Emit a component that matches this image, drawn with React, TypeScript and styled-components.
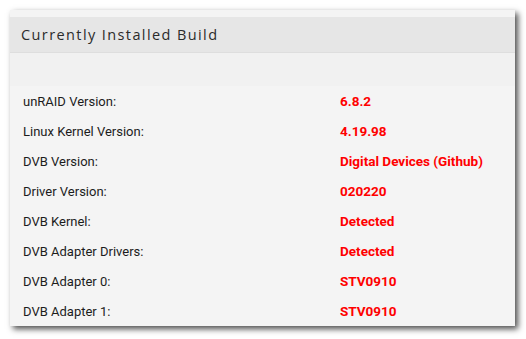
import React from 'react';
import styled, { createGlobalStyle } from 'styled-components';

const GlobalStyle = createGlobalStyle`
  html, body {
    margin: 0;
    padding: 0;
    background: #ffffff;
  }
`;

const Page = styled.div`
  padding: 10px 11px 12px 10px;
`;

const Panel = styled.div`
  width: 505px;
  background-color: #f4f4f4;
  padding-top: 7px;
  box-shadow: 3px 3px 6px rgba(0, 0, 0, 0.7);
`;

const Header = styled.div`
  height: 36px;
  display: flex;
  align-items: center;
  padding-left: 11px;
  background-color: #e6e6e6;
  border-bottom: 1px solid #dedede;
  box-sizing: border-box;
  font-family: 'Open Sans', sans-serif;
  font-size: 14.5px;
  letter-spacing: 1.4px;
  color: #2b2b2b;
`;

const Spacer = styled.div`
  height: 33px;
  background-color: #f1f1f1;
`;

const Table = styled.div`
  display: grid;
  grid-template-columns: 317px 1fr;
  padding-left: 13px;
  font-family: Roboto, 'Liberation Sans', sans-serif;
  font-size: 13px;
`;

const Label = styled.div`
  height: 30px;
  display: flex;
  align-items: center;
  color: #1c1c1c;
`;

const Value = styled.div`
  height: 30px;
  display: flex;
  align-items: center;
  color: #ff0000;
  font-size: 13.5px;
  font-weight: 700;
`;

const rows: [string, string][] = [
  ['unRAID Version:', '6.8.2'],
  ['Linux Kernel Version:', '4.19.98'],
  ['DVB Version:', 'Digital Devices (Github)'],
  ['Driver Version:', '020220'],
  ['DVB Kernel:', 'Detected'],
  ['DVB Adapter Drivers:', 'Detected'],
  ['DVB Adapter 0:', 'STV0910'],
  ['DVB Adapter 1:', 'STV0910'],
];

export default function App() {
  return (
    <>
      <GlobalStyle />
      <Page>
        <Panel>
          <Header>Currently Installed Build</Header>
          <Spacer />
          <Table>
            {rows.map(([label, value]) => (
              <React.Fragment key={label}>
                <Label>{label}</Label>
                <Value>{value}</Value>
              </React.Fragment>
            ))}
          </Table>
        </Panel>
      </Page>
    </>
  );
}
